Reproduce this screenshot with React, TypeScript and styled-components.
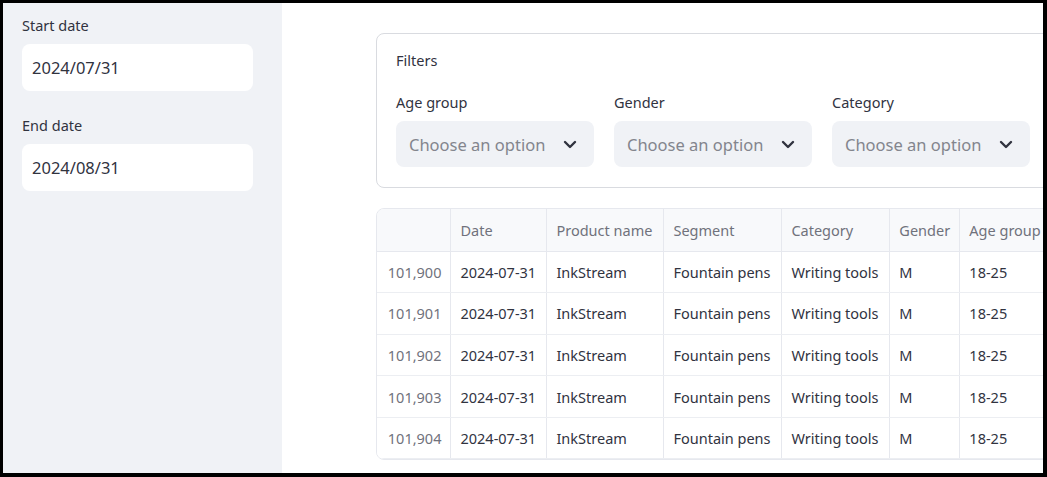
import styled, { createGlobalStyle } from 'styled-components'

const GlobalStyle = createGlobalStyle`
  html, body {
    margin: 0;
    padding: 0;
    background: #000;
  }
  body {
    font-family: "Noto Sans", "Liberation Sans", sans-serif;
    color: #31333f;
  }
  * {
    box-sizing: border-box;
  }
`

const Frame = styled.div`
  padding: 3px 4px 4px 3px;
  height: 477px;
  width: 1047px;
`

const AppShell = styled.div`
  display: flex;
  height: 100%;
  background: #ffffff;
  overflow: hidden;
`

const Sidebar = styled.aside`
  width: 279px;
  flex-shrink: 0;
  background: #f0f2f6;
  padding: 11px 29px 0 19px;
  display: flex;
  flex-direction: column;
`

const Field = styled.div`
  display: flex;
  flex-direction: column;
  margin-bottom: 23px;
`

const Label = styled.label`
  font-size: 14.5px;
  line-height: 22px;
  color: #31333f;
  margin-bottom: 8px;
`

const DateInput = styled.div`
  height: 47px;
  background: #ffffff;
  border-radius: 8px;
  padding: 0 10px;
  display: flex;
  align-items: center;
  font-size: 16.5px;
  color: #31333f;
`

const Main = styled.main`
  flex: 1;
  min-width: 0;
  padding: 30px 0 0 94px;
  display: flex;
  flex-direction: column;
  gap: 20px;
`

const FilterBox = styled.section`
  width: 900px;
  border: 1px solid #d9dbe0;
  border-radius: 8px;
  padding: 15px 19px 20px;
`

const FilterTitle = styled.div`
  font-size: 14.5px;
  line-height: 22px;
  margin-bottom: 20px;
`

const FilterRow = styled.div`
  display: flex;
  gap: 20px;
`

const SelectField = styled.div`
  width: 198px;
  display: flex;
  flex-direction: column;
`

const SelectBox = styled.div`
  height: 46px;
  background: #f0f2f6;
  border-radius: 8px;
  padding: 0 17px 0 13px;
  display: flex;
  align-items: center;
  justify-content: space-between;
  font-size: 16.5px;
  color: #83858d;
`

const TableWrap = styled.div`
  width: 900px;
  border: 1px solid #e6e8ee;
  border-radius: 8px;
  overflow: hidden;
`

const Table = styled.table`
  border-collapse: collapse;
  font-size: 14.5px;
  table-layout: fixed;
`

const HeadCell = styled.th<{ $w: number }>`
  width: ${(p) => p.$w}px;
  height: 42px;
  padding: 0 9px;
  text-align: left;
  font-weight: 400;
  color: #70727c;
  background: #f8f9fb;
  border-right: 1px solid #e6e8ee;
  border-bottom: 1px solid #e6e8ee;
  white-space: nowrap;
`

const Cell = styled.td<{ $index?: boolean }>`
  height: 41.6px;
  padding: 0 9px;
  text-align: ${(p) => (p.$index ? 'right' : 'left')};
  color: ${(p) => (p.$index ? '#70727c' : '#31333f')};
  background: #ffffff;
  border-right: 1px solid #e6e8ee;
  border-bottom: 1px solid #eceef2;
  white-space: nowrap;
`

const Chevron = () => (
  <svg width="14" height="9" viewBox="0 0 14 9" fill="none">
    <path d="M2 2 L7 7 L12 2" stroke="#31333f" strokeWidth="2.4" strokeLinecap="round" strokeLinejoin="round" />
  </svg>
)

const columns = [
  { key: '', w: 74 },
  { key: 'Date', w: 96 },
  { key: 'Product name', w: 117 },
  { key: 'Segment', w: 118 },
  { key: 'Category', w: 108 },
  { key: 'Gender', w: 70 },
  { key: 'Age group', w: 317 },
]

const rows = [101900, 101901, 101902, 101903, 101904].map((id) => ({
  id: id.toLocaleString('en-US'),
  cells: ['2024-07-31', 'InkStream', 'Fountain pens', 'Writing tools', 'M', '18-25'],
}))

const filters = ['Age group', 'Gender', 'Category']

export default function App() {
  return (
    <>
      <GlobalStyle />
      <Frame>
        <AppShell>
          <Sidebar>
            <Field>
              <Label>Start date</Label>
              <DateInput>2024/07/31</DateInput>
            </Field>
            <Field>
              <Label>End date</Label>
              <DateInput>2024/08/31</DateInput>
            </Field>
          </Sidebar>
          <Main>
            <FilterBox>
              <FilterTitle>Filters</FilterTitle>
              <FilterRow>
                {filters.map((f) => (
                  <SelectField key={f}>
                    <Label>{f}</Label>
                    <SelectBox>
                      <span>Choose an option</span>
                      <Chevron />
                    </SelectBox>
                  </SelectField>
                ))}
              </FilterRow>
            </FilterBox>
            <TableWrap>
              <Table>
                <thead>
                  <tr>
                    {columns.map((c) => (
                      <HeadCell key={c.key || 'idx'} $w={c.w}>
                        {c.key}
                      </HeadCell>
                    ))}
                  </tr>
                </thead>
                <tbody>
                  {rows.map((r) => (
                    <tr key={r.id}>
                      <Cell $index>{r.id}</Cell>
                      {r.cells.map((v, i) => (
                        <Cell key={i}>{v}</Cell>
                      ))}
                    </tr>
                  ))}
                </tbody>
              </Table>
            </TableWrap>
          </Main>
        </AppShell>
      </Frame>
    </>
  )
}
